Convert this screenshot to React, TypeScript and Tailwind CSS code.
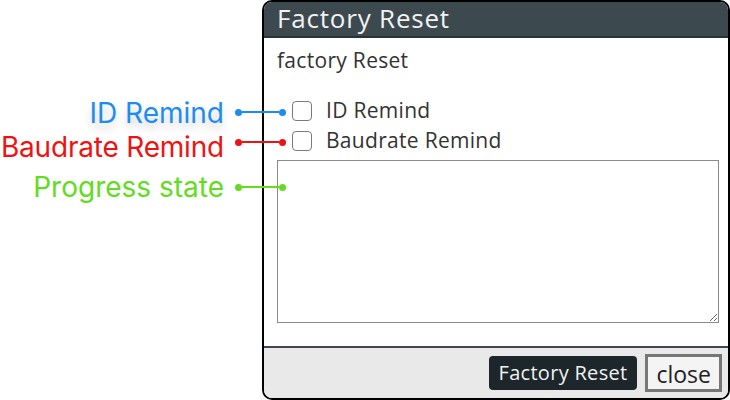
import type { ReactNode } from 'react';

const dialogFont = { fontFamily: '"Open Sans", "Noto Sans", sans-serif' };

function Callout({
  top,
  color,
  textClass,
  children,
}: {
  top: number;
  color: string;
  textClass: string;
  children: ReactNode;
}) {
  return (
    <div className="absolute left-0 flex w-[290px] items-center" style={{ top }}>
      <div className="flex w-[226px] justify-end pr-[2px]">
        <span
          className={`shrink-0 whitespace-nowrap text-[28px] leading-[32px] ${textClass}`}
          style={{ color, fontFamily: 'Inter, sans-serif' }}
        >
          {children}
        </span>
      </div>
      <span className="ml-[9px] h-[7px] w-[7px] rounded-full" style={{ background: color }} />
      <span className="h-[2px] w-[37px]" style={{ background: color }} />
      <span className="h-[7px] w-[7px] rounded-full" style={{ background: color }} />
    </div>
  );
}

function CheckRow({ label }: { label: string }) {
  return (
    <label className="flex h-[30px] items-center pl-[15px]">
      <input
        type="checkbox"
        className="h-[20px] w-[20px] appearance-none rounded-[4px] border-[1.5px] border-[#7a7a7a] bg-white"
      />
      <span className="ml-[14px] text-[21px] tracking-[0.3px] text-[#333]">{label}</span>
    </label>
  );
}

export default function App() {
  return (
    <div className="relative h-[400px] w-[730px] overflow-hidden bg-white">
      <div
        className="ml-[262px] flex h-[400px] w-[468px] flex-col overflow-hidden rounded-[10px] border-2 border-black bg-white"
        style={dialogFont}
      >
        <div className="h-[36px] shrink-0 border-b-2 border-[#27343a] bg-[#3c4a50] px-[13px] text-[26px] leading-[33px] tracking-[0.8px] text-[#f2f2f2]">
          Factory Reset
        </div>
        <div className="flex flex-1 flex-col pl-[13px]">
          <div className="pt-[8px] text-[21px] leading-[28px] tracking-[0.3px] text-[#333]">factory Reset</div>
          <div className="mt-[22px] flex flex-col">
            <CheckRow label="ID Remind" />
            <CheckRow label="Baudrate Remind" />
          </div>
          <textarea className="mt-[4px] h-[163px] w-[442px] border border-[#8a8a8a] bg-white outline-none" />
        </div>
        <div className="flex h-[52px] shrink-0 items-center justify-end gap-[8px] border-t-2 border-[#3c4a50] bg-[#e9e9e9] pr-[6px]">
          <button className="h-[34px] rounded-[4px] bg-[#1c262b] px-[10px] text-[20px] tracking-[0.3px] text-[#f2f2f2]">
            Factory Reset
          </button>
          <button className="h-[38px] border-[3px] border-[#767676] bg-[#f4f4f4] px-[8px] text-[23px] text-[#222]">
            close
          </button>
        </div>
      </div>

      <Callout top={95} color="#1c8cf5" textClass="pt-[2px] [text-shadow:0_6px_8px_rgba(0,0,0,0.18)]">
        ID Remind
      </Callout>
      <Callout top={121} color="#f01212" textClass="pt-[10px] tracking-[-0.2px]">
        Baudrate Remind
      </Callout>
      <Callout top={171} color="#62dc1e" textClass="pt-0">
        Progress state
      </Callout>
    </div>
  );
}
